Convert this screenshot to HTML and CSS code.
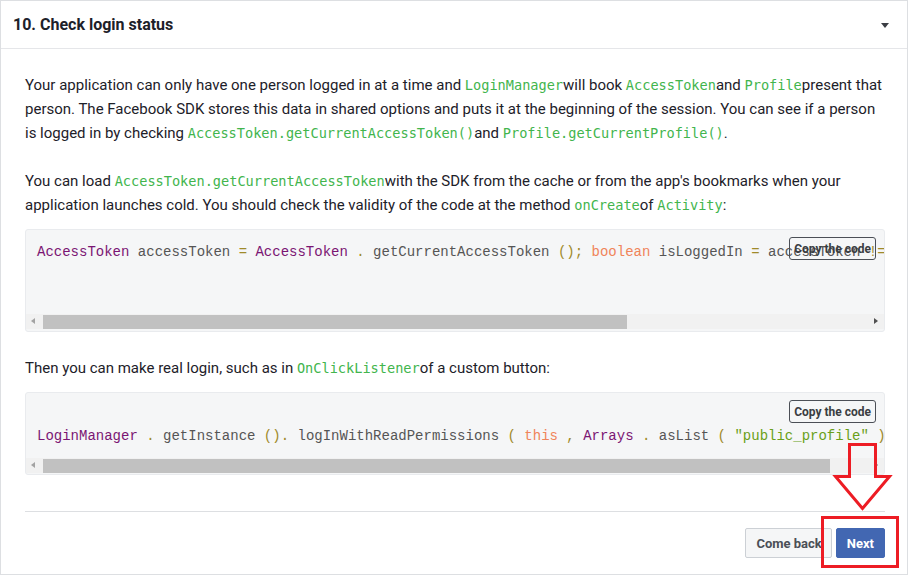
FILE: index.html
```html
<!DOCTYPE html>
<html>
<head>
<meta charset="utf-8">
<link rel="stylesheet" href="styles.css">
</head>
<body>
<div class="card">
  <div class="card-head">
    <span class="title">10. Check login status</span>
    <span class="caret"></span>
  </div>
  <div class="card-body">
    <p>Your application can only have one person logged in at a time and <code>LoginManager</code>will book <code>AccessToken</code>and <code>Profile</code>present that person. The Facebook SDK stores this data in shared options and puts it at the beginning of the session. You can see if a person is logged in by checking <code>AccessToken.getCurrentAccessToken()</code>and <code>Profile.getCurrentProfile()</code>.</p>
    <p>You can load <code>AccessToken.getCurrentAccessToken</code>with the SDK from the cache or from the app's bookmarks when your application launches cold. You should check the validity of the code at the method <code>onCreate</code>of <code>Activity</code>:</p>
    <div class="code code-one">
      <pre class="src"><span class="ty">AccessToken</span> accessToken <span class="op">=</span> <span class="ty">AccessToken</span> <span class="op">.</span> getCurrentAccessToken <span class="op">();</span> <span class="kw">boolean</span> isLoggedIn <span class="op">=</span> accessToken <span class="op">!=</span> <span class="kw">null</span> <span class="op">&amp;&amp;</span> <span class="op">!</span>accessToken <span class="op">.</span> isExpired <span class="op">();</span></pre>
      <button class="copy">Copy the code</button>
      <div class="hscroll">
        <span class="arr arr-l"></span>
        <span class="track"><span class="thumb thumb-one"></span></span>
        <span class="arr arr-r"></span>
      </div>
    </div>
    <p class="p3">Then you can make real login, such as in <code>OnClickListener</code>of a custom button:</p>
    <div class="code code-two">
      <pre class="src"><span class="ty">LoginManager</span> <span class="op">.</span> getInstance <span class="op">().</span> logInWithReadPermissions <span class="op">(</span> <span class="kw">this</span> <span class="op">,</span> <span class="ty">Arrays</span> <span class="op">.</span> asList <span class="op">(</span> <span class="str">"public_profile"</span> <span class="op">));</span></pre>
      <button class="copy">Copy the code</button>
      <div class="hscroll">
        <span class="arr arr-l"></span>
        <span class="track"><span class="thumb thumb-two"></span></span>
        <span class="arr arr-r"></span>
      </div>
    </div>
    <div class="foot">
      <button class="btn btn-back">Come back</button>
      <button class="btn btn-next">Next</button>
    </div>
  </div>
  <svg class="annot" width="910" height="575" viewBox="0 0 910 575">
    <polygon points="849.5,444.5 875.5,444.5 875.5,476.5 889.5,476.5 862.5,508.5 835.5,476.5 849.5,476.5" fill="none" stroke="#ed1c24" stroke-width="3"/>
    <rect x="822.5" y="517.5" width="75" height="49" fill="none" stroke="#ed1c24" stroke-width="3"/>
  </svg>
</div>
</body>
</html>
```

FILE: styles.css
```css
html, body {
  margin: 0;
  padding: 0;
  background: #ffffff;
}
body {
  font-family: Roboto, "Liberation Sans", Arial, sans-serif;
  color: #1d2129;
}
.card {
  position: relative;
  width: 906px;
  height: 573px;
  border: 1px solid #dddfe2;
  background: #fff;
}
.card-head {
  height: 47px;
  border-bottom: 1px solid #e5e6e9;
  display: flex;
  align-items: center;
  justify-content: space-between;
  padding: 0 18px 0 12px;
}
.title {
  font-weight: 700;
  font-size: 16px;
  color: #1d2129;
  margin-top: -1px;
}
.caret {
  width: 0;
  height: 0;
  border-left: 4px solid transparent;
  border-right: 4px solid transparent;
  border-top: 5px solid #3b3e44;
  margin-top: 2px;
}
.card-body {
  padding: 24px 22px 0 24px;
}
p {
  margin: 0 0 24px 0;
  font-size: 15px;
  line-height: 24px;
  color: #1d2129;
}
p code {
  font-family: "DejaVu Sans Mono", "Liberation Mono", monospace;
  font-size: 13.6px;
  color: #42b54d;
}
.code {
  position: relative;
  margin: -12px 0 0 0;
  background: #f5f6f7;
  border: 1px solid #e9ebee;
  border-radius: 3px;
}
.code-one {
  height: 101px;
}
.code-two {
  height: 81px;
}
.src {
  margin: 0;
  font-family: "Liberation Mono", "Courier New", monospace;
  font-size: 14px;
  line-height: 16px;
  color: #555;
  white-space: pre;
  overflow: hidden;
  padding: 14px 7px 0 11px;
  box-sizing: border-box;
}
.code-one .src {
  height: 84px;
}
.code-two .src {
  height: 65px;
  padding-top: 35px;
}
.ty { color: #7b1573; }
.op { color: #a08a2a; }
.kw { color: #f0845a; }
.str { color: #6a9f19; }
.copy {
  position: absolute;
  top: 7px;
  right: 8px;
  height: 23px;
  padding: 0 4px;
  background: transparent;
  border: 1px solid #4b4f56;
  border-radius: 3px;
  font-family: Roboto, "Liberation Sans", Arial, sans-serif;
  font-weight: 700;
  font-size: 12px;
  color: #3a3d42;
  cursor: pointer;
}
.hscroll {
  display: flex;
  align-items: center;
  height: 15px;
  background: #f1f1f1;
}
.track {
  flex: 1;
  height: 15px;
  display: flex;
  align-items: center;
}
.thumb {
  display: block;
  height: 14px;
  background: #c1c1c1;
}
.thumb-one { width: 584px; }
.thumb-two { width: 787px; }
.arr {
  width: 17px;
  height: 15px;
  position: relative;
}
.arr-l::after, .arr-r::after {
  content: "";
  position: absolute;
  top: 4px;
  width: 0;
  height: 0;
  border-top: 3.5px solid transparent;
  border-bottom: 3.5px solid transparent;
}
.arr-l::after {
  left: 5px;
  border-right: 4px solid #a3a3a3;
}
.arr-r::after {
  left: 7px;
  border-left: 4px solid #505050;
}
.p3 {
  margin-top: 24px;
}
.foot {
  margin-top: 36px;
  border-top: 1px solid #dddfe2;
  padding: 16px 0 0 0;
  display: flex;
  justify-content: flex-end;
  gap: 4px;
}
.btn {
  height: 30px;
  border-radius: 2px;
  font-family: Roboto, "Liberation Sans", Arial, sans-serif;
  font-weight: 700;
  font-size: 13px;
  cursor: pointer;
}
.btn-back {
  padding: 0 9px 0 10px;
  background: #f5f6f7;
  border: 1px solid #ccd0d5;
  color: #4b4f56;
}
.btn-next {
  padding: 0 10px;
  background: #4267b2;
  border: 1px solid #4267b2;
  color: #fff;
}
.annot {
  position: absolute;
  left: -1px;
  top: -1px;
  pointer-events: none;
}
```
